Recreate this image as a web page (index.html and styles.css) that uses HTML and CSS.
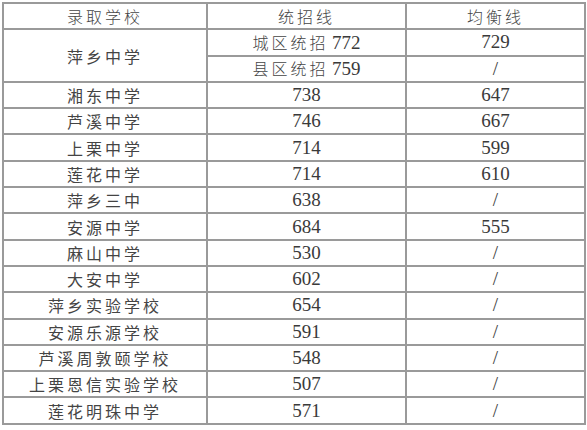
FILE: index.html
```html
<!DOCTYPE html>
<html lang="zh">
<head>
<meta charset="utf-8">
<link rel="stylesheet" href="styles.css">
</head>
<body>
<table class="score">
  <colgroup>
    <col class="c1"><col class="c2"><col class="c3">
  </colgroup>
  <tr><th>录取学校</th><th>统招线</th><th>均衡线</th></tr>
  <tr class="half"><td rowspan="2" class="cn">萍乡中学</td><td><span class="cn">城区统招</span> <span class="num">772</span></td><td class="num">729</td></tr>
  <tr class="half"><td><span class="cn">县区统招</span> <span class="num">759</span></td><td class="num">/</td></tr>
  <tr><td class="cn">湘东中学</td><td class="num">738</td><td class="num">647</td></tr>
  <tr><td class="cn">芦溪中学</td><td class="num">746</td><td class="num">667</td></tr>
  <tr><td class="cn">上栗中学</td><td class="num">714</td><td class="num">599</td></tr>
  <tr><td class="cn">莲花中学</td><td class="num">714</td><td class="num">610</td></tr>
  <tr><td class="cn">萍乡三中</td><td class="num">638</td><td class="num">/</td></tr>
  <tr><td class="cn">安源中学</td><td class="num">684</td><td class="num">555</td></tr>
  <tr><td class="cn">麻山中学</td><td class="num">530</td><td class="num">/</td></tr>
  <tr><td class="cn">大安中学</td><td class="num">602</td><td class="num">/</td></tr>
  <tr><td class="cn">萍乡实验学校</td><td class="num">654</td><td class="num">/</td></tr>
  <tr><td class="cn">安源乐源学校</td><td class="num">591</td><td class="num">/</td></tr>
  <tr><td class="cn">芦溪周敦颐学校</td><td class="num">548</td><td class="num">/</td></tr>
  <tr><td class="cn">上栗恩信实验学校</td><td class="num">507</td><td class="num">/</td></tr>
  <tr><td class="cn">莲花明珠中学</td><td class="num">571</td><td class="num">/</td></tr>
</table>
</body>
</html>
```

FILE: styles.css
```css
html, body {
  margin: 0;
  padding: 0;
  background: #ffffff;
}
body {
  padding: 2px 0 0 2px;
  color: #3a3a3a;
  font-family: "Noto Sans CJK SC", sans-serif;
}
.score {
  border-collapse: collapse;
  table-layout: fixed;
  width: 582px;
}
.c1 { width: 204px; }
.c2 { width: 199px; }
.c3 { width: 179px; }
.score th, .score td {
  border: 2px solid #9a9a9a;
  height: 24.3px;
  padding: 0;
  text-align: center;
  vertical-align: middle;
  line-height: 20px;
  font-weight: normal;
}
.score th {
  font-size: 16px;
  letter-spacing: 3px;
  font-weight: 300;
  color: #444;
}
.cn {
  font-family: "Noto Sans CJK SC", sans-serif;
  font-size: 16px;
  font-weight: 300;
  letter-spacing: 3px;
  color: #444;
}
.num {
  font-family: "Liberation Serif", serif;
  font-size: 19px;
  letter-spacing: 0;
  color: #3a3a3a;
}
```
